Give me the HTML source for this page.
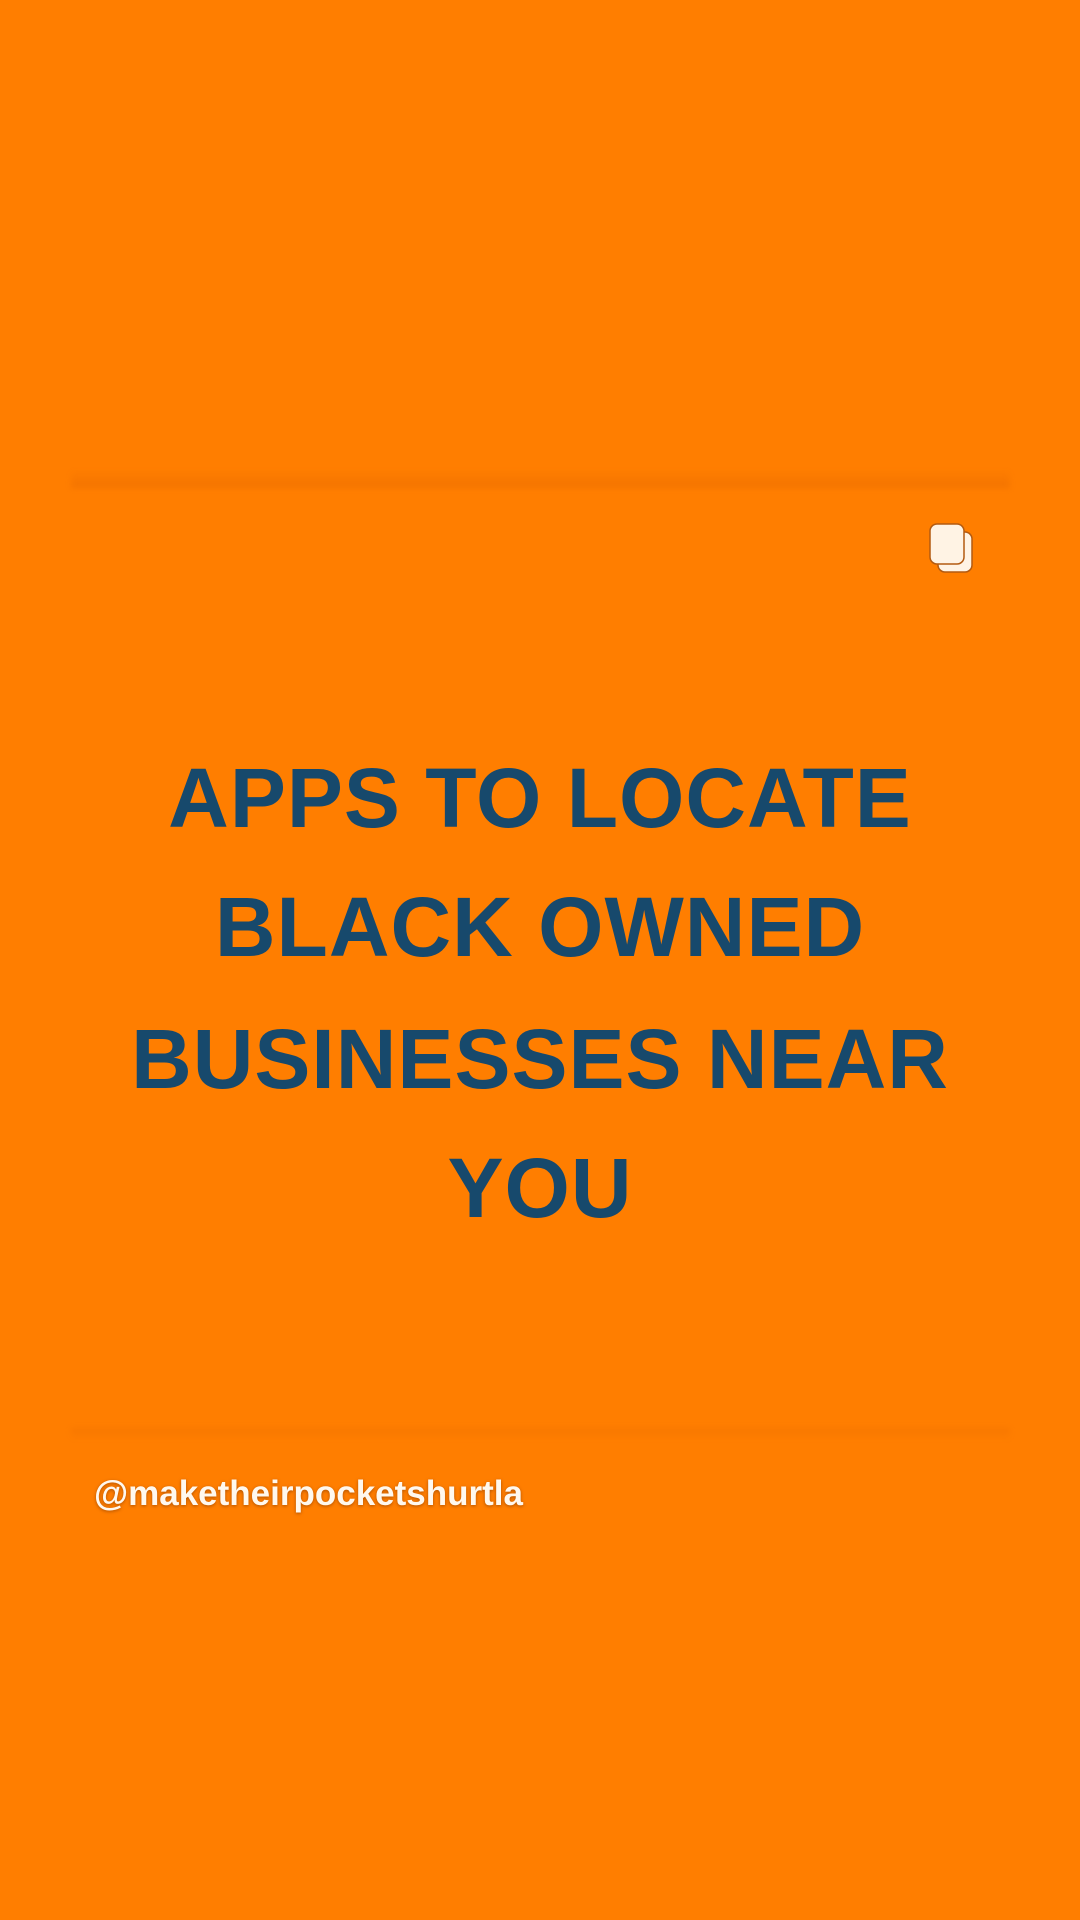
<!DOCTYPE html>
<html><head><meta charset="utf-8"><style>
html,body{margin:0;padding:0;width:1080px;height:1920px;background:#ff7e00;overflow:hidden;font-family:"Liberation Sans",sans-serif}
.band{position:absolute;left:71px;width:939px;filter:blur(3px)}
.line{position:absolute;left:0;width:1080px;text-align:center;color:#17496c;font-weight:bold;font-size:84px;line-height:100px;letter-spacing:1px}
.cap{position:absolute;left:94px;top:1474px;color:#fff8ee;font-size:35px;font-weight:bold;text-shadow:0 1px 3px rgba(120,50,0,0.6)}
</style></head><body>
<div class="band" style="top:470px;height:18px;background:linear-gradient(to bottom,rgba(200,80,0,0),rgba(200,80,0,0.22))"></div>
<div class="band" style="top:1428px;height:12px;background:linear-gradient(to bottom,rgba(200,80,0,0.15),rgba(200,80,0,0))"></div>
<svg style="position:absolute;left:926px;top:520px" width="56" height="56" viewBox="0 0 56 56">
<rect x="12" y="12" width="34" height="40" rx="7" fill="#fff3e4" stroke="#b35a10" stroke-width="1.5"/>
<rect x="4" y="4" width="34" height="40" rx="7" fill="#fff3e4" stroke="#b35a10" stroke-width="1.5"/>
</svg>
<div class="line" style="top:748px">APPS TO LOCATE</div>
<div class="line" style="top:877px">BLACK OWNED</div>
<div class="line" style="top:1009px">BUSINESSES NEAR</div>
<div class="line" style="top:1138px">YOU</div>
<div class="cap">@maketheirpocketshurtla</div>
</body></html>
